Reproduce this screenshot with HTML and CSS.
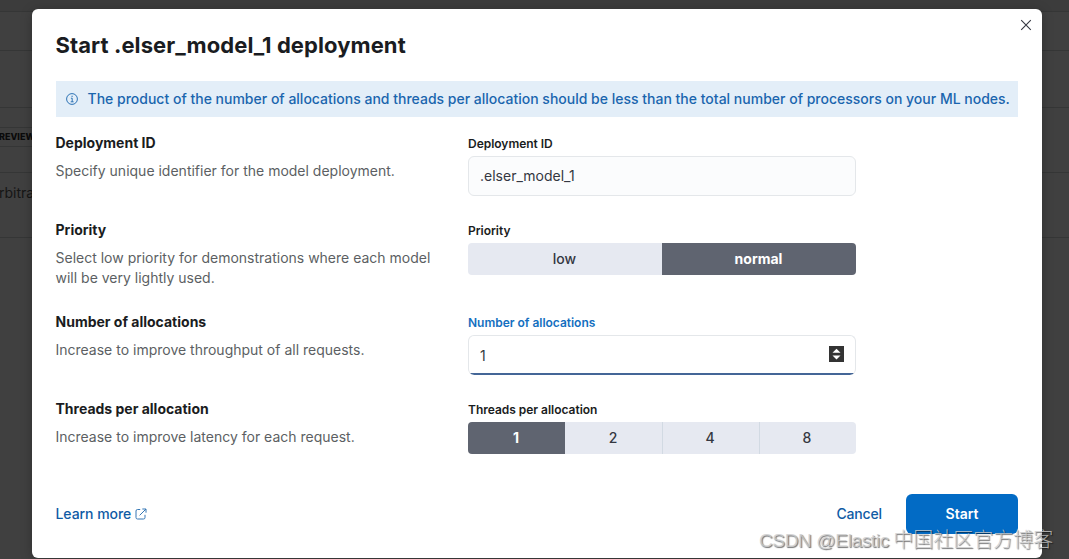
FILE: index.html
```
<!DOCTYPE html>
<html lang="en">
<head>
    <meta charset="UTF-8">
    <meta name="viewport" content="width=device-width, initial-scale=1.0">
    <title>Start deployment</title>
    <link rel="stylesheet" href="styles.css">
</head>
<body>
    <div class="page">
        <div class="line line-top"></div>
        <div class="line line-search"></div>
        <div class="line line-head"></div>
        <div class="line line-badge"><span class="badge">REVIEW</span></div>
        <div class="line line-row"></div>
        <div class="line line-last"><span>rbitra</span></div>
    </div>

    <div class="modal">
        <button type="button" class="close" aria-label="Close">
            <svg width="12" height="12" viewBox="0 0 12 12"><path d="M1.2 1.2l9.6 9.6M10.8 1.2l-9.6 9.6" fill="none" stroke="#343741" stroke-width="1.1"/></svg>
        </button>
        <h1>Start .elser_model_1 deployment</h1>

        <div class="callout">
            <svg width="12" height="12" viewBox="0 0 12 12" fill="none" stroke="#1a65ae"><circle cx="6" cy="6" r="5.4" stroke-width=".9"/><path d="M4.9 5.2H6.2V8.7M4.7 8.8H7.6" stroke-width=".9"/><path d="M5.5 3.2H6.7" stroke-width="1.1"/></svg>
            <span>The product of the number of allocations and threads per allocation should be less than the total number of processors on your ML nodes.</span>
        </div>

        <form>
            <div class="row">
                <div class="info">
                    <h2>Deployment ID</h2>
                    <p>Specify unique identifier for the model deployment.</p>
                </div>
                <div class="field">
                    <label for="deploymentId">Deployment ID</label>
                    <input type="text" id="deploymentId" value=".elser_model_1">
                </div>
            </div>
            <div class="row">
                <div class="info">
                    <h2>Priority</h2>
                    <p>Select low priority for demonstrations where each model will be very lightly used.</p>
                </div>
                <div class="field">
                    <label>Priority</label>
                    <div class="group">
                        <button type="button">low</button>
                        <button type="button" class="selected">normal</button>
                    </div>
                </div>
            </div>
            <div class="row">
                <div class="info">
                    <h2>Number of allocations</h2>
                    <p>Increase to improve throughput of all requests.</p>
                </div>
                <div class="field focused">
                    <label for="allocations">Number of allocations</label>
                    <div class="number">
                        <input type="text" id="allocations" value="1">
                        <svg class="spinner" width="15" height="16" viewBox="0 0 15 16"><path d="M0 0h15v16H0z" fill="#333"/><path d="M7.5 2.8L11.5 6.8H3.5zM7.5 13.6L3.5 9.6H11.5z" fill="#fff"/></svg>
                    </div>
                </div>
            </div>
            <div class="row">
                <div class="info">
                    <h2>Threads per allocation</h2>
                    <p>Increase to improve latency for each request.</p>
                </div>
                <div class="field">
                    <label>Threads per allocation</label>
                    <div class="group">
                        <button type="button" class="selected">1</button>
                        <button type="button">2</button>
                        <button type="button">4</button>
                        <button type="button">8</button>
                    </div>
                </div>
            </div>
        </form>

        <footer>
            <a href="#" class="learn">Learn more
                <svg width="12" height="12" viewBox="0 0 12 12" fill="none" stroke="#3577b5"><path d="M5.2 1.5H2.5Q1 1.5 1 3V9.5Q1 11 2.5 11H8.5Q10 11 10 9.5V6.8M7.3 1H11V4.7M11 1L4.6 7.4"/></svg>
            </a>
            <div class="actions">
                <a href="#" class="cancel">Cancel</a>
                <button type="button" class="start">Start</button>
            </div>
        </footer>
    </div>

    <div class="watermark"><span>CSDN @Elastic</span> 中国社区官方博客</div>
</body>
</html>
```
FILE: styles.css
```
* {
    box-sizing: border-box;
}
body {
    font-family: Inter, "Noto Sans CJK SC", sans-serif;
    margin: 0;
    height: 559px;
    overflow: hidden;
    position: relative;
    background-color: #404040;
    color: #1a1c21;
    font-size: 14px;
}
h1, h2, p {
    margin: 0;
}
button, input {
    font-family: inherit;
    font-size: 14px;
}
a {
    color: #0f5ba5;
    font-weight: 500;
    text-decoration: none;
}

/* dimmed page behind the dialog */
.line {
    border-bottom: 1px solid #353636;
    color: #151515;
}
.line-top {
    height: 12px;
    background-color: #3c3c3c;
}
.line-search {
    height: 39px;
}
.line-head {
    height: 57px;
}
.line-badge {
    width: 32px;
    height: 39px;
    padding-top: 19px;
}
.badge {
    display: block;
    height: 20px;
    line-height: 18px;
    margin-left: -1px;
    border-top: 1px solid #353636;
    color: #0a0a0a;
    font-size: 9px;
    font-weight: 800;
}
.line-row {
    height: 26px;
}
.line-last {
    height: 65px;
    line-height: 40px;
}
.line-last span {
    margin-left: -1px;
}

.modal {
    position: absolute;
    top: 9px;
    left: 32px;
    width: 1010px;
    height: 549px;
    padding: 22px 24px 24px 23.5px;
    background-color: #fff;
    border-radius: 6px;
    box-shadow: 0 2px 12px rgba(0, 0, 0, 0.25);
}
.close {
    position: absolute;
    top: 10px;
    right: 10px;
    padding: 0;
    border: none;
    background: none;
    line-height: 0;
}
h1 {
    font-size: 22px;
    line-height: 28px;
    font-weight: 700;
    letter-spacing: 0.08px;
    white-space: nowrap;
}
.callout {
    display: flex;
    align-items: center;
    gap: 10px;
    height: 36px;
    margin: 22px 0 14px;
    padding: 0 0 1px 10px;
    background-color: #e3eef8;
    color: #1a65ae;
    font-weight: 500;
    white-space: nowrap;
}
form {
    display: flex;
    flex-direction: column;
    gap: 22px;
}
.row {
    display: grid;
    grid-template-columns: 388px 388px;
    gap: 24.5px;
}
.info {
    min-height: 65px;
}
h2 {
    font-size: 14px;
    line-height: 24px;
    font-weight: 700;
}
.info p {
    margin-top: 6px;
    line-height: 20px;
    color: #5c5f63;
}
.field {
    height: 65px;
}
label {
    display: block;
    height: 25px;
    line-height: 26px;
    font-size: 12px;
    font-weight: 600;
    letter-spacing: -0.02px;
}
input {
    display: block;
    width: 100%;
    height: 40px;
    padding: 0 11px 2px;
    border: 1px solid #e4e7ea;
    border-radius: 6px;
    background-color: #fbfcfd;
    color: #343741;
}
.focused label {
    color: #146fc0;
}
.number {
    position: relative;
}
.number input {
    padding-bottom: 1px;
    border-bottom: none;
    background: linear-gradient(#446697, #446697) bottom / 100% 2px no-repeat border-box #fff;
}
.spinner {
    position: absolute;
    top: 11px;
    right: 12px;
}
.group {
    display: flex;
    height: 32px;
    border-radius: 4px;
    overflow: hidden;
}
.group button {
    flex: 1 1 0;
    padding: 0 1px 2px 0;
    border: none;
    background-color: #e6e9f1;
    color: #343741;
    font-weight: 500;
}
.group button + button {
    box-shadow: inset 1px 0 #d2dae3;
}
.group .selected, .group .selected + button {
    box-shadow: none;
}
.group .selected {
    background-color: #5f6470;
    color: #fff;
    font-weight: 700;
}
footer {
    display: flex;
    justify-content: space-between;
    align-items: center;
    margin-top: 32px;
}
.learn {
    display: flex;
    align-items: center;
    gap: 4px;
    padding-bottom: 1px;
    letter-spacing: -0.05px;
}
.actions {
    display: flex;
    align-items: center;
    gap: 24px;
}
.cancel {
    padding-bottom: 1px;
    letter-spacing: -0.15px;
}
.start {
    width: 112px;
    height: 40px;
    padding-bottom: 2px;
    border: none;
    border-radius: 6px;
    background-color: #026bc5;
    color: #fff;
    font-weight: 600;
}

.watermark {
    position: absolute;
    top: 524px;
    left: 759px;
    font: 300 20px/30px "Noto Sans CJK SC", sans-serif;
    color: rgba(205, 205, 205, 0.8);
    text-shadow: 1px 1px 1px rgba(0, 0, 0, 0.55);
    white-space: nowrap;
}
.watermark span {
    font-family: "Liberation Sans", sans-serif;
    font-size: 19px;
    letter-spacing: -0.35px;
}
```
